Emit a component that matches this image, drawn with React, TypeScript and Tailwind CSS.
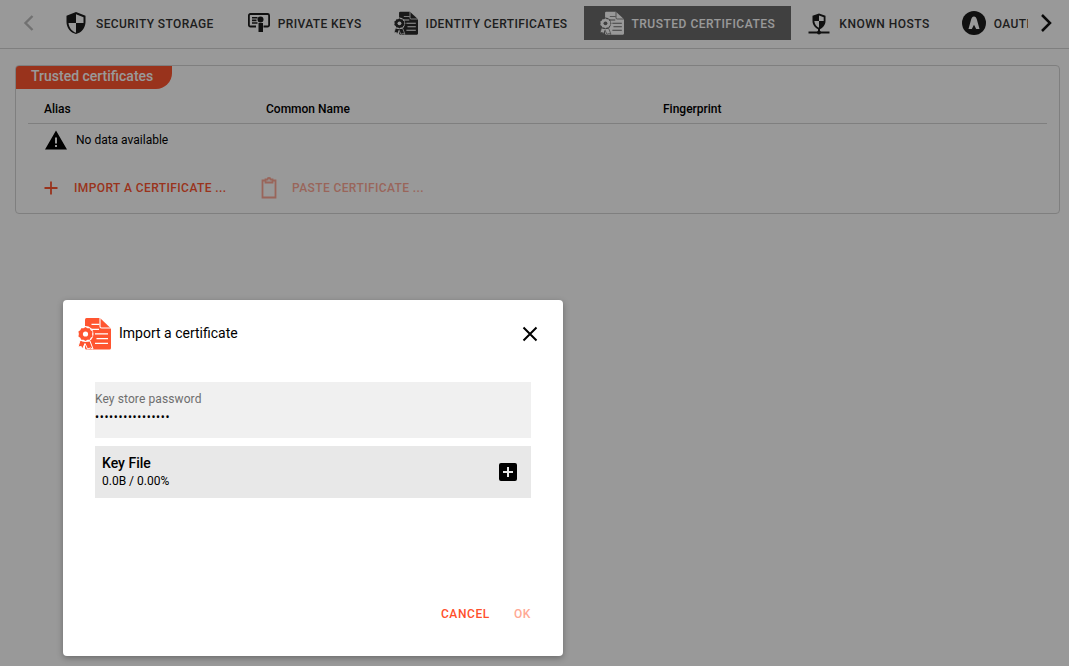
import React from "react";

const CertDoc = ({ size, color, hole }: { size: number; color: string; hole: string }) => (
  <svg width={size} height={size} viewBox="0 0 33 33">
    <path d="M8.500 1h13.500l11 10.500V31a1.500 1.500 0 0 1-1.500 1.500H8.500A1.500 1.500 0 0 1 7 31V2.500A1.500 1.500 0 0 1 8.500 1z" fill={color} />
    <path d="M22 1v8.500a1.500 1.500 0 0 0 1.500 1.500H33" fill="none" stroke={hole} strokeWidth="1.100" />
    <path d="M13.500 6.800h8v1.200h-8zM13.500 11.800h7.500V13h-7.500zM17 16.200h13v1.200H17zM18.500 21h11.500v1.200H18.500zM17 25.800h13V27H17z" fill={hole} />
    <path d="M2 23.500 0 30l3.200-.5 1.300 2.500 2.500-5.500 2.500 5.500 3-1 2.500 1-3-8z" fill={color} stroke={hole} strokeWidth="1" />
    <circle cx="7.500" cy="17" r="8" fill={hole} />
    <path d="M7.500 10l1.900 1.300 2.300-.1 1 2.100 1.900 1.300-.5 2.400.5 2.400-1.900 1.300-1 2.100-2.300-.1-1.900 1.300-1.900-1.300-2.300.1-1-2.100-1.900-1.300.5-2.400-.5-2.400 1.900-1.300 1-2.100 2.300.1z" fill={color} />
    <circle cx="7.500" cy="17" r="2.600" fill={hole} />
  </svg>
);

const Shield = () => (
  <svg width="24" height="24" viewBox="0 0 24 24">
    <path fillRule="evenodd" fill="#1c1c1c" d="M12 1l9.500 3.800v6.200c0 5.700-4 10.800-9.500 12-5.500-1.200-9.500-6.300-9.500-12V4.800zM12 3.200L19.500 6.200V12H12v9.700C8 20.500 5 16.700 4.500 12H12z" />
  </svg>
);

const KeyCard = () => (
  <svg width="24" height="24" viewBox="0 0 24 24">
    <path fill="none" stroke="#1c1c1c" strokeWidth="1.800" d="M10 15.500H4.400a1.500 1.500 0 0 1-1.500-1.500V4.500A1.500 1.500 0 0 1 4.400 3h17.200a1.500 1.500 0 0 1 1.500 1.500V14a1.500 1.500 0 0 1-1.500 1.500H17.500" />
    <path fill="#1c1c1c" d="M6 6h5.500v1.600H6zM6 8.600h4.500v1.600H6zM6 11.200h5.500v1.600H6z" />
    <circle cx="14.500" cy="8.500" r="3" fill="#1c1c1c" />
    <path fill="#1c1c1c" d="M12.500 12h4.500v9h-4.500z" />
  </svg>
);

const Hosts = () => (
  <svg width="24" height="24" viewBox="0 0 24 24">
    <path fillRule="evenodd" fill="#1c1c1c" d="M12 2.500l6.500 2.300v5.200c0 3.900-2.700 7.200-6.500 8.500-3.800-1.300-6.500-4.600-6.500-8.500V4.800zM12 4.500l4.700 1.700v3.800H12v6.800c-2.500-1-4.400-3.700-4.700-6.800H12z" />
    <path fill="#1c1c1c" d="M11 18h2v3h-2z" />
    <path fill="#1c1c1c" d="M1.500 20.500h21v2h-21z" />
    <circle cx="12" cy="21.500" r="2" fill="#1c1c1c" />
  </svg>
);

const OAuth = () => (
  <svg width="24" height="24" viewBox="0 0 24 24">
    <circle cx="12" cy="12" r="12" fill="#1c1c1c" />
    <path fill="#ffffff" d="M12 5.500c1.500 0 2.300 1.200 2.800 2.800L17.500 18h-3.300L12 13.800 9.800 18H6.500l2.700-9.700C9.700 6.700 10.500 5.500 12 5.500z" />
  </svg>
);

const tabs = [
  { label: "SECURITY STORAGE", icon: <Shield />, track: "tracking-[0.4px]" },
  { label: "PRIVATE KEYS", icon: <KeyCard />, track: "tracking-[0.4px]" },
  { label: "IDENTITY CERTIFICATES", icon: <CertDoc size={24} color="#2a2a2a" hole="#ffffff" />, track: "tracking-[0.4px]" },
  { label: "TRUSTED CERTIFICATES", icon: <CertDoc size={24} color="#ffffff" hole="#6b6b6b" />, active: true, track: "tracking-[0.5px]" },
  { label: "KNOWN HOSTS", icon: <Hosts />, track: "tracking-[0.5px]" },
  { label: "OAUTH", icon: <OAuth />, track: "tracking-[0.4px]" },
];

export default function App() {
  return (
    <div className="relative h-[666px] w-[1069px] overflow-hidden bg-white font-['Roboto',sans-serif] text-[#212121]">
      <div className="flex h-[49px] items-center border-b border-[#d4d4d4] pb-[2px]">
        <div className="flex h-full w-[48px] items-center justify-center pl-[10px]">
          <svg width="24" height="24" viewBox="0 0 24 24" fill="none" stroke="#bdbdbd" strokeWidth="2.400"><path d="M15.500 5 8.500 12l7 7" /></svg>
        </div>
        <div className="flex h-[34px] w-[980px] overflow-hidden">
          {tabs.map((t) => (
            <div
              key={t.label}
              className={
                t.active
                  ? "flex shrink-0 items-center gap-2 bg-[#6b6b6b] px-4 text-white"
                  : "flex shrink-0 items-center gap-2 px-4 text-[#333333]"
              }
            >
              <span className="flex h-6 w-6 items-center justify-center">{t.icon}</span>
              <span className={"mt-[1px] text-[12px] leading-none font-medium " + t.track}>{t.label}</span>
            </div>
          ))}
        </div>
        <div className="flex h-full flex-1 items-center justify-center pr-[6px]">
          <svg width="24" height="24" viewBox="0 0 24 24" fill="none" stroke="#111111" strokeWidth="2.500"><path d="M8 4l8 8-8 8" /></svg>
        </div>
      </div>

      <div className="px-[9px] pt-[16px] pl-[15px]">
        <div className="h-[149px] overflow-hidden rounded border border-[#d4d4d4]">
          <div className="flex h-[23px] w-[156px] items-center rounded-br-[16px] bg-[#ff5530] pb-[2px] pl-[15px] text-[14px] font-medium text-white">
            Trusted certificates
          </div>
          <div className="px-[12px]">
            <div className="flex h-[35px] items-end border-b border-[#d4d4d4] pb-[5px] pl-[16px] text-[12px] font-medium text-[#000000]">
              <span className="w-[222px]">Alias</span>
              <span className="w-[397px]">Common Name</span>
              <span>Fingerprint</span>
            </div>
            <div className="flex h-[32px] items-center pl-[16px] text-[12px] text-black">
              <svg width="24" height="24" viewBox="0 0 24 24"><path fillRule="evenodd" d="M1 21.500 12 2.500l11 19zM11 9.500v6h2v-6zM11 17v2h2v-2z" /></svg>
              <span className="ml-[8px]">No data available</span>
            </div>
            <div className="mt-[20px] flex items-center pl-[11px] text-[12px] font-medium text-[#ff5530]">
              <svg width="24" height="24" viewBox="0 0 24 24" fill="none" stroke="#ff5530" strokeWidth="1.800"><path d="M12 5.500v13M5.500 12h13" /></svg>
              <span className="ml-[11px] w-[152px] tracking-[0.42px] whitespace-nowrap">IMPORT A CERTIFICATE ...</span>
              <div className="ml-[31px] flex items-center opacity-50">
                <svg width="24" height="24" viewBox="0 0 24 24" fill="none" stroke="#ff5530" strokeWidth="1.800"><path d="M8.500 4.500H5.500v17h13v-17h-3M8.500 3.500h2a1.500 1.500 0 0 1 3 0h2v3h-7z" /></svg>
                <span className="ml-[11px] tracking-[0.4px] whitespace-nowrap">PASTE CERTIFICATE ...</span>
              </div>
            </div>
          </div>
        </div>
      </div>

      <div className="absolute inset-0 bg-black/40">
        <div className="absolute top-[300px] left-[63px] flex h-[356px] w-[500px] flex-col rounded bg-white shadow-[0_2px_6px_rgba(0,0,0,0.3)]">
          <div className="flex h-[66px] items-center pt-[1px] pr-[21px] pl-[15px]">
            <CertDoc size={33} color="#ff5530" hole="#ffffff" />
            <span className="ml-[8px] flex-1 text-[14px] text-black">Import a certificate</span>
            <svg width="24" height="24" viewBox="0 0 24 24" fill="none" stroke="#000" strokeWidth="2"><path d="M5.500 5.500l13 13M18.500 5.500l-13 13" /></svg>
          </div>
          <div className="flex flex-col gap-2 px-[32px] pt-[16px]">
            <div className="h-[56px] bg-[#f0f0f0] pt-[10px]">
              <div className="text-[12px] leading-[14px] tracking-[0.1px] text-[#6e6e6e]">Key store password</div>
              <div className="mt-[4px] text-[12px] leading-[14px] tracking-[0.65px] text-black">••••••••••••••••</div>
            </div>
            <div className="flex h-[52px] items-center justify-between bg-[#e8e8e8] pr-[11px] pl-[7px]">
              <div className="flex flex-col text-black">
                <span className="text-[14px] leading-[18px] font-medium">Key File</span>
                <span className="text-[12px] leading-[18px]">0.0B / 0.00%</span>
              </div>
              <svg width="24" height="24" viewBox="0 0 24 24"><path fillRule="evenodd" d="M5 3h14a2 2 0 0 1 2 2v14a2 2 0 0 1-2 2H5a2 2 0 0 1-2-2V5a2 2 0 0 1 2-2zM11 7v4H7v2h4v4h2v-4h4v-2h-4V7z" /></svg>
            </div>
          </div>
          <div className="mt-auto flex justify-end gap-[24px] pr-[32px] pb-[35px] text-[12px] leading-[14px] font-medium tracking-[0.6px]">
            <span className="text-[#ff4f2b]">CANCEL</span>
            <span className="text-[#ffa994]">OK</span>
          </div>
        </div>
      </div>
    </div>
  );
}
